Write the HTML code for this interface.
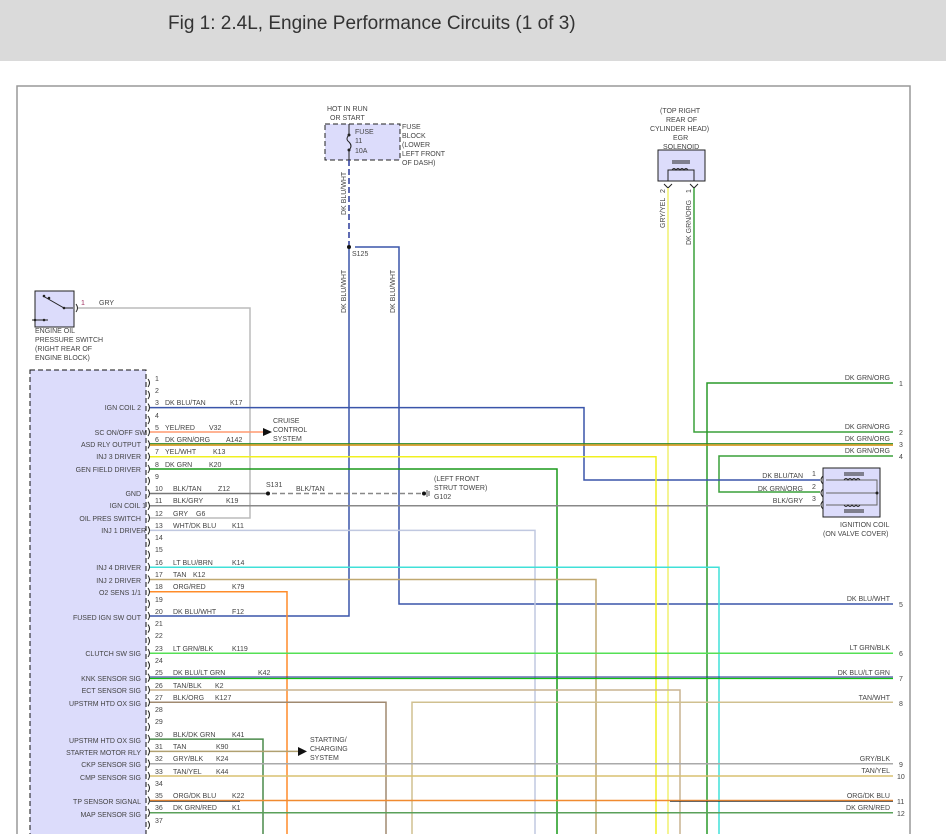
<!DOCTYPE html>
<html><head><meta charset="utf-8"><style>
html,body{margin:0;padding:0;background:#fff;width:946px;height:834px;overflow:hidden}
.hdr{position:absolute;left:0;top:0;width:946px;height:61px;background:#dadada;}
.hdr span{position:absolute;left:168px;top:13px;font:19px "Liberation Sans",sans-serif;color:#333}
svg{position:absolute;left:0;top:0}
text{font-family:"Liberation Sans",sans-serif;font-size:7px;fill:#444}
.pl{text-anchor:end;fill:#3a3a66}
.pn{font-size:7px;fill:#444}
.r{text-anchor:end}
</style></head><body>
<div class="hdr"><span>Fig 1: 2.4L, Engine Performance Circuits (1 of 3)</span></div>
<svg width="946" height="834" viewBox="0 0 946 834" fill="none">
<path d="M17 834V86H910V834" stroke="#999" stroke-width="1.5"/>
<rect x="30" y="370" width="116" height="470" fill="#dcdcfb" stroke="#111" stroke-dasharray="5,3"/>
<rect x="325" y="124" width="75" height="36" fill="#dcdcfb" stroke="#222" stroke-dasharray="5,3"/>
<path d="M349 124V135M349 150V160" stroke="#222"/>
<path d="M349 135q-4 4 0 7q4 4 0 8" stroke="#222"/>
<circle cx="349" cy="135" r="1.5" fill="#222"/><circle cx="349" cy="150" r="1.5" fill="#222"/>
<text x="355" y="134">FUSE</text><text x="355" y="143">11</text><text x="355" y="153">10A</text>
<text x="327" y="111">HOT IN RUN</text><text x="330" y="120">OR START</text>
<text x="402" y="129">FUSE</text><text x="402" y="138">BLOCK</text><text x="402" y="147">(LOWER</text><text x="402" y="156">LEFT FRONT</text><text x="402" y="165">OF DASH)</text>
<path d="M349 160V245" stroke="#2a3a9a" stroke-width="1.5" stroke-dasharray="6,3"/>
<circle cx="349" cy="247" r="2" fill="#111"/>
<text x="352" y="256">S125</text>
<text transform="translate(346 215) rotate(-90)">DK BLU/WHT</text>
<text transform="translate(346 313) rotate(-90)">DK BLU/WHT</text>
<text transform="translate(395 313) rotate(-90)">DK BLU/WHT</text>
<path d="M349 249V616H150" stroke="#3a55aa" stroke-width="1.5"/>
<path d="M355 247H399V604H893" stroke="#3a55aa" stroke-width="1.5"/>
<rect x="35" y="291" width="39" height="36" fill="#dcdcfb" stroke="#222"/>
<path d="M43 296L64 308H73M43 320H48M32 320H44" stroke="#222"/>
<circle cx="44" cy="296" r="1.3" fill="#222"/><circle cx="49" cy="298" r="1.3" fill="#222"/><circle cx="64" cy="308" r="1.3" fill="#222"/><circle cx="35" cy="320" r="1.3" fill="#222"/><circle cx="44" cy="320" r="1.3" fill="#222"/>
<path d="M76 304q3 4 0 8" stroke="#222"/>
<text x="81" y="305" style="fill:#a03060">1</text><text x="99" y="305">GRY</text>
<text x="35" y="333">ENGINE OIL</text><text x="35" y="342">PRESSURE SWITCH</text><text x="35" y="351">(RIGHT REAR OF</text><text x="35" y="360">ENGINE BLOCK)</text>
<path d="M78 308H250V518H150" stroke="#bbb" stroke-width="1.5"/>
<rect x="658" y="150" width="47" height="31" fill="#dcdcfb" stroke="#222"/>
<path d="M672 161H690M672 163H690M668 181V170h26v11" stroke="#222"/>
<path d="M672 170q2-3 4 0q2-3 4 0q2-3 4 0q2-3 4 0" stroke="#222"/>
<path d="M664 184l4 4l4-4M690 184l4 4l4-4" stroke="#222"/>
<text x="660" y="113">(TOP RIGHT</text><text x="666" y="122">REAR OF</text><text x="650" y="131">CYLINDER HEAD)</text><text x="673" y="140">EGR</text><text x="663" y="149">SOLENOID</text>
<text transform="translate(665 228) rotate(-90)">GRY/YEL</text><text transform="translate(665 193) rotate(-90)">2</text>
<text transform="translate(691 245) rotate(-90)">DK GRN/ORG</text><text transform="translate(691 193) rotate(-90)">1</text>
<path d="M668 188V834" stroke="#f0f070" stroke-width="1.5"/>
<path d="M694 188V432H893" stroke="#3aa03a" stroke-width="1.5"/>
<path d="M707 834V383H893" stroke="#2a9a2a" stroke-width="1.5"/>
<text class="r" x="890" y="380">DK GRN/ORG</text><text x="899" y="386">1</text>
<text class="r" x="890" y="429">DK GRN/ORG</text><text x="899" y="435">2</text>
<text class="r" x="890" y="441">DK GRN/ORG</text><text x="899" y="447">3</text>
<text class="r" x="890" y="453">DK GRN/ORG</text><text x="899" y="459">4</text>
<path d="M893 456H719V492H820" stroke="#3aa03a" stroke-width="1.5"/>
<rect x="823" y="468" width="57" height="49" fill="#dcdcfb" stroke="#222"/>
<path d="M826 480H877V505H826M826 493H877" stroke="#666"/>
<path d="M844 480q2-3 4 0q2-3 4 0q2-3 4 0q2-3 4 0M844 505q2 3 4 0q2 3 4 0q2 3 4 0q2 3 4 0M844 475H864M844 473H864M844 510H864M844 512H864" stroke="#222"/>
<circle cx="877" cy="493" r="1.5" fill="#222"/>
<path d="M823 476q-4 4 0 8M823 489q-4 4 0 8M823 501q-4 4 0 8" stroke="#222"/>
<text class="r" x="803" y="478">DK BLU/TAN</text><text x="812" y="476">1</text>
<text class="r" x="803" y="491">DK GRN/ORG</text><text x="812" y="489">2</text>
<text class="r" x="803" y="503">BLK/GRY</text><text x="812" y="501">3</text>
<text x="840" y="527">IGNITION COIL</text><text x="823" y="536">(ON VALVE COVER)</text>
<path d="M150 407.6H584V480H820" stroke="#3a55aa" stroke-width="1.5"/>
<path d="M150 432H266" stroke="#ff9a70" stroke-width="1.5"/>
<path d="M263 428L272 432L263 436Z" fill="#111"/>
<text x="273" y="423">CRUISE</text><text x="273" y="432">CONTROL</text><text x="273" y="441">SYSTEM</text>
<path d="M150 445H893" stroke="#d08a00" stroke-width="1.5"/><path d="M150 443.6H893" stroke="#2a8a2a" stroke-width="1"/>
<path d="M150 456.7H656V834" stroke="#f0f020" stroke-width="1.5"/>
<path d="M150 469H557V834" stroke="#1a9a1a" stroke-width="1.5"/>
<path d="M150 493.5H268" stroke="#777" stroke-width="1.5"/>
<circle cx="268" cy="493.5" r="2" fill="#111"/>
<path d="M272 493.5H424" stroke="#888" stroke-width="1.5" stroke-dasharray="5,3"/>
<circle cx="424" cy="493.5" r="2" fill="#111"/><path d="M427 490V497M429 491V496" stroke="#555"/>
<text x="266" y="487">S131</text><text x="296" y="491">BLK/TAN</text>
<text x="434" y="481">(LEFT FRONT</text><text x="434" y="490">STRUT TOWER)</text><text x="434" y="499">G102</text>
<path d="M150 505.8H820" stroke="#888" stroke-width="1.5"/>
<path d="M150 530.4H535V834" stroke="#c0c8e0" stroke-width="1.5"/>
<path d="M150 567.2H719V834" stroke="#40e0d8" stroke-width="1.5"/>
<path d="M150 579.5H596V834" stroke="#c0a870" stroke-width="1.5"/>
<path d="M150 591.8H287V834" stroke="#ff8c2a" stroke-width="1.5"/>
<path d="M150 653.2H893" stroke="#55e055" stroke-width="1.5"/>
<path d="M150 677H893" stroke="#1a2a8a" stroke-width="1"/><path d="M150 678.5H893" stroke="#10c010" stroke-width="1.2"/>
<path d="M150 690H680V834" stroke="#c8b490" stroke-width="1.5"/>
<path d="M150 702.3H386V834" stroke="#a08a70" stroke-width="1.5"/>
<path d="M412 834V702.3H893" stroke="#d0c090" stroke-width="1.5"/>
<path d="M150 739.1H263V834" stroke="#4a8a4a" stroke-width="1.5"/>
<path d="M150 751.4H300" stroke="#b0a070" stroke-width="1.5"/>
<path d="M298 747L307 751.4L298 756Z" fill="#111"/>
<text x="310" y="742">STARTING/</text><text x="310" y="751">CHARGING</text><text x="310" y="760">SYSTEM</text>
<path d="M150 763.7H893" stroke="#aaa" stroke-width="1.5"/>
<path d="M150 776H893" stroke="#d8c070" stroke-width="1.5"/>
<path d="M150 800.5H893" stroke="#f08a30" stroke-width="1.5"/><path d="M150 801.3H240M670 801.3H893" stroke="#333" stroke-width="0.8"/>
<path d="M150 812.8H893" stroke="#5aa05a" stroke-width="1.5"/>
<text class="r" x="890" y="601">DK BLU/WHT</text><text x="899" y="607">5</text>
<text class="r" x="890" y="650">LT GRN/BLK</text><text x="899" y="656">6</text>
<text class="r" x="890" y="675">DK BLU/LT GRN</text><text x="899" y="681">7</text>
<text class="r" x="890" y="700">TAN/WHT</text><text x="899" y="706">8</text>
<text class="r" x="890" y="761">GRY/BLK</text><text x="899" y="767">9</text>
<text class="r" x="890" y="773">TAN/YEL</text><text x="897" y="779">10</text>
<text class="r" x="890" y="798">ORG/DK BLU</text><text x="897" y="804">11</text>
<text class="r" x="890" y="810">DK GRN/RED</text><text x="897" y="816">12</text>
<g stroke="#222" fill="none">
<path d="M148 379q3 4 0 8M148 391q3 4 0 8M148 403.6q3 4 0 8M148 416q3 4 0 8M148 428q3 4 0 8M148 440.4q3 4 0 8M148 452.7q3 4 0 8M148 465q3 4 0 8M148 477q3 4 0 8M148 489.5q3 4 0 8M148 501.8q3 4 0 8M148 514q3 4 0 8M148 526.4q3 4 0 8M148 538.6q3 4 0 8M148 551q3 4 0 8M148 563q3 4 0 8M148 575.5q3 4 0 8M148 588q3 4 0 8M148 600q3 4 0 8M148 612q3 4 0 8M148 624.6q3 4 0 8M148 637q3 4 0 8M148 649q3 4 0 8M148 661.4q3 4 0 8M148 673.7q3 4 0 8M148 686q3 4 0 8M148 698.3q3 4 0 8M148 710.6q3 4 0 8M148 723q3 4 0 8M148 735q3 4 0 8M148 747.4q3 4 0 8M148 759.7q3 4 0 8M148 772q3 4 0 8M148 784q3 4 0 8M148 796.5q3 4 0 8M148 808.8q3 4 0 8M148 821q3 4 0 8"/>
</g>
<g class="pn">
<text x="155" y="381">1</text><text x="155" y="393">2</text><text x="155" y="405">3</text><text x="155" y="418">4</text><text x="155" y="430">5</text><text x="155" y="442">6</text><text x="155" y="454">7</text><text x="155" y="467">8</text><text x="155" y="479">9</text><text x="155" y="491">10</text><text x="155" y="503">11</text><text x="155" y="516">12</text><text x="155" y="528">13</text><text x="155" y="540">14</text><text x="155" y="552">15</text><text x="155" y="565">16</text><text x="155" y="577">17</text><text x="155" y="589">18</text><text x="155" y="602">19</text><text x="155" y="614">20</text><text x="155" y="626">21</text><text x="155" y="638">22</text><text x="155" y="651">23</text><text x="155" y="663">24</text><text x="155" y="675">25</text><text x="155" y="688">26</text><text x="155" y="700">27</text><text x="155" y="712">28</text><text x="155" y="724">29</text><text x="155" y="737">30</text><text x="155" y="749">31</text><text x="155" y="761">32</text><text x="155" y="774">33</text><text x="155" y="786">34</text><text x="155" y="798">35</text><text x="155" y="810">36</text><text x="155" y="823">37</text>
</g>
<text x="165" y="405">DK BLU/TAN</text><text x="230" y="405">K17</text>
<text x="165" y="430">YEL/RED</text><text x="209" y="430">V32</text>
<text x="165" y="442">DK GRN/ORG</text><text x="226" y="442">A142</text>
<text x="165" y="454">YEL/WHT</text><text x="213" y="454">K13</text>
<text x="165" y="467">DK GRN</text><text x="209" y="467">K20</text>
<text x="173" y="491">BLK/TAN</text><text x="218" y="491">Z12</text>
<text x="173" y="503">BLK/GRY</text><text x="226" y="503">K19</text>
<text x="173" y="516">GRY</text><text x="196" y="516">G6</text>
<text x="173" y="528">WHT/DK BLU</text><text x="232" y="528">K11</text>
<text x="173" y="565">LT BLU/BRN</text><text x="232" y="565">K14</text>
<text x="173" y="577">TAN</text><text x="193" y="577">K12</text>
<text x="173" y="589">ORG/RED</text><text x="232" y="589">K79</text>
<text x="173" y="614">DK BLU/WHT</text><text x="232" y="614">F12</text>
<text x="173" y="651">LT GRN/BLK</text><text x="232" y="651">K119</text>
<text x="173" y="675">DK BLU/LT GRN</text><text x="258" y="675">K42</text>
<text x="173" y="688">TAN/BLK</text><text x="215" y="688">K2</text>
<text x="173" y="700">BLK/ORG</text><text x="215" y="700">K127</text>
<text x="173" y="737">BLK/DK GRN</text><text x="232" y="737">K41</text>
<text x="173" y="749">TAN</text><text x="216" y="749">K90</text>
<text x="173" y="761">GRY/BLK</text><text x="216" y="761">K24</text>
<text x="173" y="774">TAN/YEL</text><text x="216" y="774">K44</text>
<text x="173" y="798">ORG/DK BLU</text><text x="232" y="798">K22</text>
<text x="173" y="810">DK GRN/RED</text><text x="232" y="810">K1</text>
<g class="pl">
<text x="141" y="410">IGN COIL 2</text><text x="146" y="435">SC ON/OFF SW</text><text x="141" y="447">ASD RLY OUTPUT</text><text x="141" y="459">INJ 3 DRIVER</text><text x="141" y="472">GEN FIELD DRIVER</text><text x="141" y="496">GND</text><text x="146" y="508">IGN COIL 1</text><text x="141" y="521">OIL PRES SWITCH</text><text x="146" y="533">INJ 1 DRIVER</text><text x="141" y="570">INJ 4 DRIVER</text><text x="141" y="583">INJ 2 DRIVER</text><text x="141" y="595">O2 SENS 1/1</text><text x="141" y="620">FUSED IGN SW OUT</text><text x="141" y="656">CLUTCH SW SIG</text><text x="141" y="681">KNK SENSOR SIG</text><text x="141" y="693">ECT SENSOR SIG</text><text x="141" y="706">UPSTRM HTD OX SIG</text><text x="141" y="743">UPSTRM HTD OX SIG</text><text x="141" y="755">STARTER MOTOR RLY</text><text x="141" y="767">CKP SENSOR SIG</text><text x="141" y="780">CMP SENSOR SIG</text><text x="141" y="804">TP SENSOR SIGNAL</text><text x="141" y="817">MAP SENSOR SIG</text>
</g>
</svg>
</body></html>
